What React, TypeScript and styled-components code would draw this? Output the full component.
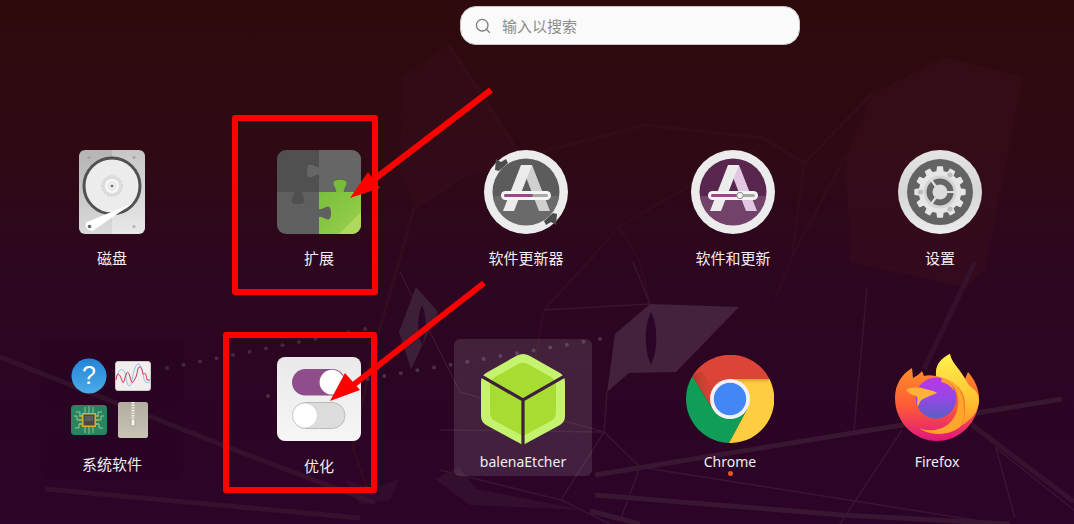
import React from "react";
import styled, { createGlobalStyle } from "styled-components";

const Global = createGlobalStyle`
  html, body { margin: 0; padding: 0; background: #2b0428; }
  * { box-sizing: border-box; }
  svg { flex-shrink: 0; display: block; }
`;

const Page = styled.main`
  position: relative;
  width: 1074px;
  height: 524px;
  overflow: hidden;
  background: linear-gradient(180deg, #2e0a0c 0%, #2f0a14 28%, #2d0620 52%, #2b0429 100%);
  font-family: "Noto Sans", "Noto Sans CJK SC", sans-serif;
`;

const Layer = styled.svg`
  position: absolute;
  left: 0;
  top: 0;
  width: 1074px;
  height: 524px;
  pointer-events: none;
`;

const Content = styled.div`
  position: relative;
  display: flex;
  flex-direction: column;
`;

const SearchBar = styled.div`
  display: flex;
  align-items: center;
  gap: 11px;
  width: 340px;
  height: 39px;
  margin: 6px 0 0 460px;
  padding-left: 14px;
  background: #fafafa;
  border: 1px solid #c9c6c8;
  border-radius: 16px;
  color: #8c8c8c;
  font-size: 15px;
  font-family: "Noto Sans CJK SC", sans-serif;
`;

const TopRow = styled.div`
  display: grid;
  grid-template-columns: repeat(5, 207px);
  margin: 105px 0 0 8.5px;
`;

const BottomRow = styled.div`
  display: flex;
  margin: 71px 0 0 8.5px;
`;

const Group = styled.div<{ $cols: number; $shift?: number }>`
  display: grid;
  grid-template-columns: repeat(${(p) => p.$cols}, 207px);
  margin-left: ${(p) => p.$shift ?? 0}px;
`;

const Cell = styled.div`
  display: flex;
  justify-content: center;
  align-items: flex-start;
`;

const Tile = styled.div<{ $top?: number; $tone?: "plain" | "selected" | "folder" }>`
  display: flex;
  flex-direction: column;
  align-items: center;
  width: ${(p) => (p.$tone === "folder" ? 142 : 138)}px;
  height: ${(p) => (p.$tone === "folder" ? 141 : p.$tone === "selected" ? 137 : 118)}px;
  padding-top: ${(p) => p.$top ?? 0}px;
  border-radius: 6px;
  background: ${(p) =>
    p.$tone === "selected"
      ? "rgba(255,255,255,0.11)"
      : p.$tone === "folder"
      ? "rgba(0,0,0,0.05)"
      : "transparent"};
`;

const Label = styled.span<{ $gap: number; $latin?: boolean }>`
  margin-top: ${(p) => p.$gap}px;
  height: 20px;
  flex-shrink: 0;
  line-height: 20px;
  font-size: ${(p) => (p.$latin ? 14 : 15)}px;
  color: #f0eef0;
  white-space: nowrap;
  font-family: ${(p) =>
    p.$latin ? `"Noto Sans", sans-serif` : `"Noto Sans CJK SC", sans-serif`};
`;

const RunDot = styled.span`
  width: 5px;
  height: 5px;
  flex-shrink: 0;
  margin-top: -1px;
  border-radius: 50%;
  background: #e95420;
`;

const MiniGrid = styled.div`
  display: grid;
  grid-template-columns: 44px 44px;
  grid-template-rows: 44px 44px;
  place-items: center;
  margin-right: 2px;
`;

/* ---------- drawings ---------- */

const Glass = () => (
  <svg width="16" height="16" viewBox="0 0 16 16" fill="none" stroke="#7d7d7d" strokeWidth="1.3">
    <circle cx="7.2" cy="7.2" r="5.8" />
    <path d="M11.5 11.5 14.8 14.8" />
  </svg>
);

const Disk = () => (
  <svg width="66" height="84" viewBox="0 0 66 84">
    <defs>
      <linearGradient id="dkL" x1="0" y1="0" x2="0" y2="1">
        <stop offset="0" stopColor="#b4b4b4" />
        <stop offset="1" stopColor="#dadada" />
      </linearGradient>
      <linearGradient id="dkR" x1="0" y1="0" x2="0" y2="1">
        <stop offset="0" stopColor="#c6c6c6" />
        <stop offset="1" stopColor="#e8e8e8" />
      </linearGradient>
      <clipPath id="dkC">
        <rect width="66" height="84" rx="6" />
      </clipPath>
    </defs>
    <g clipPath="url(#dkC)">
      <rect width="33" height="84" fill="url(#dkL)" />
      <rect x="33" width="33" height="84" fill="url(#dkR)" />
    </g>
    <circle cx="10" cy="7.5" r="1.6" fill="#a4a4a4" />
    <circle cx="55" cy="7.5" r="1.6" fill="#a4a4a4" />
    <circle cx="55" cy="76.5" r="1.6" fill="#b4b4b4" />
    <circle cx="33" cy="36" r="28" fill="#ececec" stroke="#515151" strokeWidth="3" />
    <circle cx="33" cy="36" r="10.5" fill="#dcdcdc" stroke="#cfcfcf" strokeWidth="1" strokeDasharray="1.6 2.4" />
    <circle cx="33" cy="36" r="6.3" fill="#ececec" stroke="#fff" strokeWidth="1.2" />
    <circle cx="33" cy="36" r="1.3" fill="#666" />
    <path d="M7 72.5 54 53 13.5 81 Q5 80 7 72.5Z" fill="#fff" />
    <circle cx="10.5" cy="76.5" r="1.8" fill="#666" />
  </svg>
);

const knob = "M-4 0C-3-3-6.5-6-6.5-9-6.5-11.5-3-12 0-12 3-12 6.5-11.5 6.5-9 6.5-6 3-3 4 0Z";

const Puzzle = () => (
  <svg width="84" height="84" viewBox="0 0 84 84">
    <defs>
      <clipPath id="pzC">
        <rect width="84" height="84" rx="9" />
      </clipPath>
      <linearGradient id="pzG" x1="0" y1="0" x2="1" y2="1">
        <stop offset="0" stopColor="#78bf3e" />
        <stop offset="1" stopColor="#9bd04a" />
      </linearGradient>
    </defs>
    <g clipPath="url(#pzC)">
      <rect width="42" height="42" fill="#505050" />
      <rect x="42" width="42" height="42" fill="#666" />
      <rect y="42" width="42" height="42" fill="#5f5f5f" />
      <rect x="42" y="42" width="42" height="42" fill="url(#pzG)" />
      <path d="M84 62V84H62Z" fill="#afd95c" />
      <path d={knob} fill="#78bc3c" transform="translate(63 42)" />
      <path d={knob} fill="#666" transform="translate(42 21) rotate(-90)" />
      <path d={knob} fill="#505050" transform="translate(21 42) rotate(180)" />
      <path d={knob} fill="#5f5f5f" transform="translate(42 63) rotate(90)" />
    </g>
  </svg>
);

const LetterBadge = ({
  id,
  top,
  bottom,
  right,
  knobbed,
}: {
  id: string;
  top: string;
  bottom: string;
  right: string;
  knobbed?: boolean;
}) => (
  <svg width="84" height="84" viewBox="0 0 84 84">
    <defs>
      <clipPath id={id}>
        <circle cx="42" cy="42" r="33.5" />
      </clipPath>
    </defs>
    <circle cx="42" cy="42" r="42" fill="#ececec" />
    <g clipPath={`url(#${id})`}>
      <rect width="84" height="46" fill={top} />
      <rect y="46" width="84" height="38" fill={bottom} />
    </g>
    {!knobbed && (
      <>
        <path d="M12 9 17 12 22 9 24 13 15 21 11 20Z" fill="#4c4c4c" />
        <path d="M72 75 67 72 62 75 60 71 69 63 73 64Z" fill="#4c4c4c" />
      </>
    )}
    <path d="M48 15 66 61H55L40 22Z" fill={right} />
    <path d="M37 15H48L30 61H19Z" fill="#ececec" />
    <rect x="17" y="41" width="50" height="9" rx="4.5" fill="#f4f4f4" />
    <rect x="20" y="44" width="44" height="3" rx="1.5" fill="#a8a8a8" />
    <rect x="20" y="44" width="29" height="3" rx="1.5" fill="#8f4b8a" />
    {knobbed && <circle cx="49" cy="45.5" r="3.2" fill="#f2f2f2" stroke="#8a8a8a" strokeWidth="1" />}
  </svg>
);

const gearPath = (() => {
  const n = 12;
  const pts: string[] = [];
  for (let i = 0; i < n; i++) {
    const a = (i / n) * Math.PI * 2 - Math.PI / 2;
    const w = (Math.PI / n) * 0.5;
    const add = (r: number, t: number) =>
      pts.push(`${(42 + r * Math.cos(t)).toFixed(2)} ${(42 + r * Math.sin(t)).toFixed(2)}`);
    add(20.5, a - w * 1.1);
    add(25, a - w * 0.7);
    add(25, a + w * 0.7);
    add(20.5, a + w * 1.1);
  }
  return "M" + pts.join("L") + "Z";
})();

const Settings = () => (
  <svg width="84" height="84" viewBox="0 0 84 84">
    <defs>
      <linearGradient id="stR" x1="0" y1="0" x2="0" y2="1">
        <stop offset="0" stopColor="#e4e4e4" />
        <stop offset=".5" stopColor="#d6d6d6" />
        <stop offset="1" stopColor="#ececec" />
      </linearGradient>
    </defs>
    <circle cx="42" cy="42" r="42" fill="url(#stR)" />
    <circle cx="42" cy="42" r="33" fill="#636363" />
    <path d={gearPath} fill="#e6e6e6" strokeLinejoin="round" stroke="#e6e6e6" strokeWidth="1.5" />
    <circle cx="42" cy="42" r="15" fill="#666" stroke="#d4d4d4" strokeWidth="3" />
    <path d="M42 42 32 28.5M42 42H58M42 42 32 55.5" stroke="#dedede" strokeWidth="2.2" />
    <circle cx="42" cy="42" r="7.5" fill="#dcdcdc" />
    <circle cx="52" cy="25" r="2.6" fill="#bdbdbd" />
    <circle cx="22.5" cy="42" r="2.6" fill="#bdbdbd" />
    <circle cx="52" cy="59" r="2.6" fill="#bdbdbd" />
  </svg>
);

const HelpIcon = () => (
  <svg width="36" height="36" viewBox="0 0 36 36">
    <defs>
      <linearGradient id="hpG" x1="0" y1="0" x2="0" y2="1">
        <stop offset="0" stopColor="#2384d8" />
        <stop offset="1" stopColor="#4cabe9" />
      </linearGradient>
    </defs>
    <circle cx="18" cy="18" r="17.5" fill="url(#hpG)" />
    <text x="18" y="26" textAnchor="middle" fontSize="25" fontFamily="Liberation Sans, sans-serif" fill="#fff">
      ?
    </text>
  </svg>
);

const MonitorIcon = () => (
  <svg width="36" height="30" viewBox="0 0 36 30">
    <rect x=".5" y=".5" width="35" height="29" rx="2.5" fill="#f1efee" stroke="#cfcac8" />
    <path
      d="M1 18C3 10 6 6 9 10S11 24 14 25 17 14 20 7 25 3 27 8 28 20 31 21 34 21 35 21"
      fill="none"
      stroke="#8ec1e8"
      strokeWidth="1"
    />
    <path
      d="M1 19C2 11 4 12 6 17S8 24 10 17 13 9 15 16 17 23 20 18 22 5 25 6 27 15 29 13 31 14 32 19H35"
      fill="none"
      stroke="#d5324e"
      strokeWidth="1"
    />
  </svg>
);

const ChipIcon = () => (
  <svg width="36" height="30" viewBox="0 0 36 30">
    <rect width="36" height="30" rx="3.5" fill="#2a8460" />
    <path
      d="M12 15H6V11H3M12 11H9V7H5M12 19H8V23H4M24 15H30V11H33M24 11H27V7H31M24 19H28V23H32M14 8V2M18 8V1M22 8V2M14 22V28M18 22V29M22 22V28"
      fill="none"
      stroke="#9dcfa0"
      strokeWidth=".9"
    />
    <path d="M12 11H8M12 15H8M12 19H8M24 11H28M24 15H28M24 19H28" stroke="#d9b12f" strokeWidth="1.2" />
    <rect x="11" y="8" width="14" height="14" fill="#d9b12f" />
    <rect x="12.5" y="9.5" width="11" height="11" fill="#484848" />
    <rect x="14" y="11" width="8" height="5" fill="#5e5e5e" />
  </svg>
);

const ZipIcon = () => (
  <svg width="30" height="36" viewBox="0 0 30 36">
    <defs>
      <linearGradient id="zpG" x1="0" y1="0" x2="0" y2="1">
        <stop offset="0" stopColor="#b2ad9f" />
        <stop offset="1" stopColor="#c9c5b6" />
      </linearGradient>
    </defs>
    <rect width="30" height="36" rx="2.5" fill="url(#zpG)" />
    <path d="M15 0V21" stroke="#f2f0ea" strokeWidth="3" strokeDasharray="1.4 1.2" />
    <rect x="13" y="17" width="4" height="7" rx="1" fill="#f2f0ea" stroke="#8a8678" strokeWidth=".6" />
  </svg>
);

const Toggles = () => (
  <svg width="84" height="84" viewBox="0 0 84 84">
    <defs>
      <linearGradient id="tgG" x1="0" y1="0" x2="0" y2="1">
        <stop offset="0" stopColor="#e9e9e9" />
        <stop offset="1" stopColor="#f6f6f6" />
      </linearGradient>
    </defs>
    <rect width="84" height="84" rx="8" fill="url(#tgG)" />
    <rect x="15" y="12" width="53.5" height="26.5" rx="13.25" fill="#8f4e8b" />
    <circle cx="55" cy="25.2" r="12.4" fill="#fff" />
    <rect x="15.5" y="45.5" width="52.5" height="26" rx="13" fill="#dcdcdc" stroke="#bcbcbc" />
    <circle cx="28" cy="58.5" r="12.4" fill="#fff" stroke="#c6c6c6" strokeWidth=".6" />
  </svg>
);

const Etcher = () => (
  <svg width="84" height="92" viewBox="0 0 84 92">
    <path
      d="M36 2.5Q42-.5 48 2.5L79 20Q84 23 84 29V63Q84 69 79 72L42 92 5 72Q0 69 0 63V29Q0 23 5 20Z"
      fill="#c6f36f"
    />
    <path
      d="M37 11Q42 8.5 47 11L70 24Q75 27 75 32V60Q75 65 70 68L42 83 14 68Q9 65 9 60V32Q9 27 14 24Z"
      fill="#a7dd33"
    />
    <path d="M0 23 42 47 84 23M42 47V92" fill="none" stroke="#3f1d3c" strokeWidth="3.2" />
  </svg>
);

const Chrome = () => (
  <svg width="88" height="88" viewBox="-44 -44 88 88">
    <defs>
      <linearGradient id="crS" x1="0" y1="0" x2="1" y2="0">
        <stop offset="0" stopColor="#b33a2e" />
        <stop offset="1" stopColor="#db4437" stopOpacity="0" />
      </linearGradient>
      <linearGradient id="crY" x1="0" y1="0" x2="0" y2="1">
        <stop offset="0" stopColor="#d9a02e" />
        <stop offset="1" stopColor="#ffcd40" stopOpacity="0" />
      </linearGradient>
    </defs>
    <path d="M-37.5-23A44 44 0 0 0-1 44L17.3 10H-17.3Z" fill="#0f9d58" />
    <path d="M39.5-20A44 44 0 0 1-1 44L17.3 10 0-20Z" fill="#ffcd40" />
    <path d="M39.5-20A44 44 0 0 0-37.5-23L-17.3 10 0-20Z" fill="#db4437" />
    <path d="M-37.5-23-17.3 10-10-2-28-28Z" fill="url(#crS)" />
    <path d="M0-20H39.5L36-14 14-14Z" fill="url(#crY)" />
    <circle r="20" fill="#f2f2f2" />
    <circle r="16.2" fill="#4387f6" />
  </svg>
);

const Firefox = () => (
  <svg width="84" height="88" viewBox="0 0 84 88">
    <defs>
      <linearGradient id="ffB" x1="0" y1="0" x2="0" y2="1">
        <stop offset="0" stopColor="#ff9f24" />
        <stop offset=".6" stopColor="#ff5a36" />
        <stop offset="1" stopColor="#e0157f" />
      </linearGradient>
      <linearGradient id="ffY" x1="0" y1="0" x2="0" y2="1">
        <stop offset="0" stopColor="#fff44f" />
        <stop offset=".7" stopColor="#ffbc2e" />
        <stop offset="1" stopColor="#ff8f2e" />
      </linearGradient>
      <linearGradient id="ffP" x1="0" y1="0" x2="0" y2="1">
        <stop offset="0" stopColor="#bb36e2" />
        <stop offset=".45" stopColor="#9a45e8" />
        <stop offset="1" stopColor="#5c5ec4" />
      </linearGradient>
    </defs>
    <path
      d="M0 44C0 30 7 20 17 14L18 24C21 22 25 20 27 17L29 22C32 21 36 21 41 22 40 10 47 4 55 0 56 8 64 14 70 25L73 18C80 26 84 35 84 44 84 68 65 87 42 87S0 68 0 44Z"
      fill="url(#ffB)"
    />
    <path
      d="M41 22C40 10 47 4 55 0 56 8 64 14 72 28 74 34 84 35 84 46 84 58 76 66 66 72 72 58 72 40 62 32 56 26 48 24 41 22Z"
      fill="url(#ffY)"
    />
    <path d="M66 72C58 80 38 84 24 74 38 80 58 74 62 56 66 42 60 32 52 26 68 30 74 54 66 72Z" fill="#ffa52c" />
    <circle cx="41" cy="44" r="20.5" fill="url(#ffP)" />
    <path d="M11 36C16 33 24 33 30 35 36 36 41 38 42 39 36 42 27 44 25 48 24 50 23 52 23 53 21 48 24 44 21 42 17 41 13 39 11 36Z" fill="#ffb13c" />
    <path d="M47 24C53 25 58 30 59 37 56 32 52 29 46 28Z" fill="#ff9c2c" />
  </svg>
);

/* ---------- wallpaper ---------- */

const upperDots = Array.from({ length: 13 }, (_, i) => [167 + i * 16.5, 368 - i * 3.25]);
const lowerDots = Array.from({ length: 21 }, (_, i) => [268 + i * 16.6, 396 - i * 2.85]);

const Wallpaper = () => (
  <Layer viewBox="0 0 1074 524">
    <path d="M873 93 944 57 1023 77 985 270 966 288 851 262 845 157Z" fill="#3a0d1c" opacity=".5" />
    <path d="M402 77 449 45 493 107 530 170 467 175 414 208 400 170Z" fill="#3a0d1c" opacity=".45" />
    <g fill="none" stroke="#3a0f1e" strokeWidth="2" opacity=".6">
      <path d="M449 45 530 170 537 153 645 125 763 138 804 163 873 93" strokeWidth="3" />
      <path d="M804 163 792 257 775 300M845 157 792 257" />
      <path d="M760 145 619 227 640 262 650 304M619 227 588 262 544 310 533 370" />
      <path d="M414 208 399 262 373 352 353 449 370 495" strokeWidth="3" />
      <path d="M467 175 414 208" />
    </g>
    <g fill="none" stroke="#3f1836" strokeWidth="1.5" opacity=".8">
      <path d="M650 304 633 262M650 304 544 310M607 392 604 432 640 467 1000 524M604 432 561 500 440 470M640 467 621 518" />
      <path d="M604 432 460 392 400 272M561 500 610 524M440 430 604 432" />
      <path d="M867 288 854 430M1015 518 996 448 1074 510" />
      <path d="M902 430 840 524" />
    </g>
    <g fill="none" stroke="#391632" strokeWidth="5">
      <path d="M595 475 1062 399" />
      <path d="M595 495 842 515 1010 524" />
      <path d="M590 511 640 524" />
      <path d="M972 425 1074 502" opacity=".8" />
      <path d="M975 262 924 369" opacity=".7" />
    </g>
    <g fill="none" stroke="#36112e" strokeWidth="5">
      <path d="M0 357 240 452 375 503" />
      <path d="M45 489 360 518" />
    </g>
    <path d="M650 304 739 307 676 372 629 373 607 392 615 334Z" fill="#44223d" />
    <path d="M651 312C658 325 658 350 651 365 644 350 644 325 651 312Z" fill="#2c0628" />
    <path d="M416 287 438 312 411 369 399 332Z" fill="#3d2038" />
    <path d="M422 305C427 315 427 335 422 345 417 335 417 315 422 305Z" fill="#2c0628" />
    <path d="M435 479 459 467 476 489 585 510 470 505Z" fill="#391632" opacity=".6" />
    <path d="M399 479 390 500 360 505 345 480 375 488Z" fill="#391632" opacity=".45" />
    {upperDots.map(([x, y]) => (
      <circle key={`u${x}`} cx={x} cy={y} r="2" fill="#432840" />
    ))}
    {lowerDots.map(([x, y]) => (
      <circle key={`l${x}`} cx={x} cy={y} r="2" fill="#4a3047" />
    ))}
  </Layer>
);

const Annotations = () => (
  <Layer viewBox="0 0 1074 524">
    <g fill="none" stroke="#ff0000" strokeWidth="6" strokeLinejoin="round">
      <rect x="235" y="118" width="140" height="174" />
      <rect x="226" y="335" width="148" height="155" />
      <path d="M491 90 368 184" />
      <path d="M484 283 352 386" />
    </g>
    <path d="M350 198 368 172 380 188Z" fill="#ff0000" />
    <path d="M330 401 345 373 360 390Z" fill="#ff0000" />
  </Layer>
);

export default function App() {
  return (
    <Page>
      <Global />
      <Wallpaper />
      <Content>
        <SearchBar>
          <Glass />
          <span>输入以搜索</span>
        </SearchBar>
        <TopRow>
          <Cell>
            <Tile>
              <Disk />
              <Label $gap={14}>磁盘</Label>
            </Tile>
          </Cell>
          <Cell>
            <Tile>
              <Puzzle />
              <Label $gap={14}>扩展</Label>
            </Tile>
          </Cell>
          <Cell>
            <Tile>
              <LetterBadge id="lbA" top="#5c5c5c" bottom="#6a6a6a" right="#d0d0d0" />
              <Label $gap={14}>软件更新器</Label>
            </Tile>
          </Cell>
          <Cell>
            <Tile>
              <LetterBadge id="lbB" top="#59264f" bottom="#72426a" right="#e2c6e2" knobbed />
              <Label $gap={14}>软件和更新</Label>
            </Tile>
          </Cell>
          <Cell>
            <Tile>
              <Settings />
              <Label $gap={14}>设置</Label>
            </Tile>
          </Cell>
        </TopRow>
        <BottomRow>
          <Group $cols={2}>
            <Cell>
              <Tile $tone="folder" $top={15}>
                <MiniGrid>
                  <HelpIcon />
                  <MonitorIcon />
                  <ChipIcon />
                  <ZipIcon />
                </MiniGrid>
                <Label $gap={12}>系统软件</Label>
              </Tile>
            </Cell>
            <Cell>
              <Tile $top={18}>
                <Toggles />
                <Label $gap={15}>优化</Label>
              </Tile>
            </Cell>
          </Group>
          <Group $cols={3} $shift={-3}>
            <Cell>
              <Tile $tone="selected" $top={14}>
                <Etcher />
                <Label $gap={7} $latin>
                  balenaEtcher
                </Label>
              </Tile>
            </Cell>
            <Cell>
              <Tile $top={16}>
                <Chrome />
                <Label $gap={9} $latin>
                  Chrome
                </Label>
                <RunDot />
              </Tile>
            </Cell>
            <Cell>
              <Tile $top={15}>
                <Firefox />
                <Label $gap={10} $latin>
                  Firefox
                </Label>
              </Tile>
            </Cell>
          </Group>
        </BottomRow>
      </Content>
      <Annotations />
    </Page>
  );
}
